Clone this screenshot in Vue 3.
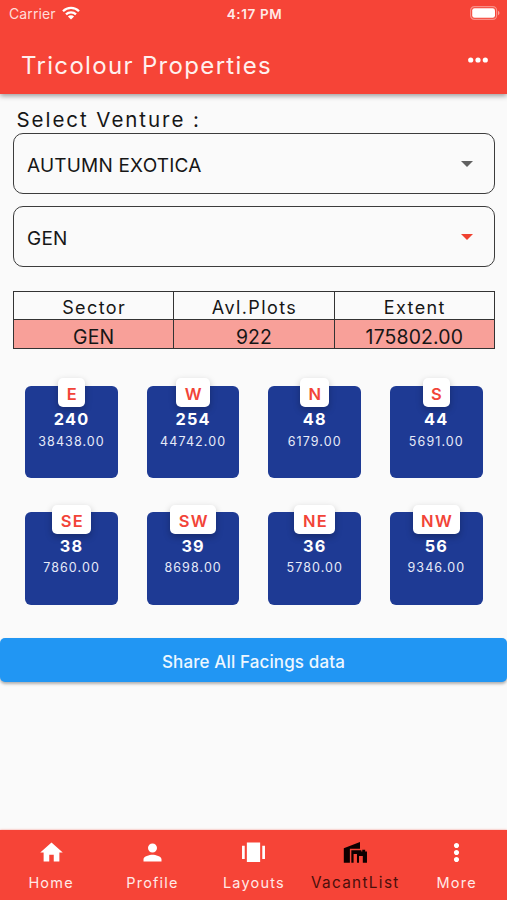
<script setup>
const facings = [
  { name: 'E', plots: '240', extent: '38438.00' },
  { name: 'W', plots: '254', extent: '44742.00' },
  { name: 'N', plots: '48', extent: '6179.00' },
  { name: 'S', plots: '44', extent: '5691.00' },
  { name: 'SE', plots: '38', extent: '7860.00' },
  { name: 'SW', plots: '39', extent: '8698.00' },
  { name: 'NE', plots: '36', extent: '5780.00' },
  { name: 'NW', plots: '56', extent: '9346.00' },
]

const tabs = [
  { label: 'Home', path: 'M10 20v-6h4v6h5v-8h3L12 3 2 12h3v8z' },
  { label: 'Profile', path: 'M12 12c2.21 0 4-1.79 4-4s-1.79-4-4-4-4 1.79-4 4 1.79 4 4 4zm0 2c-2.67 0-8 1.34-8 4v2h16v-2c0-2.66-5.33-4-8-4z' },
  { label: 'Layouts', path: 'M6.1 3.2h11.8v17.2H6.1zM1.8 6h2.4v11.8H1.8zM19.8 6h2.4v11.8h-2.4z' },
  { label: 'VacantList', active: true, path: 'M1.6 21V8.2L16 2.6v6.1H7V21zM8.3 21V10.1h8.9V11H18V9.6h2.6V11h1.6v10h-3.7v-5.8h-3.4V21h-1.8v-7.6h-3V21z' },
  { label: 'More', path: 'M12 8.1c1.27 0 2.3-1.03 2.3-2.3S13.27 3.5 12 3.5 9.7 4.53 9.7 5.8s1.03 2.3 2.3 2.3zm0 1.6c-1.27 0-2.3 1.03-2.3 2.3s1.03 2.3 2.3 2.3 2.3-1.03 2.3-2.3-1.03-2.3-2.3-2.3zm0 6.2c-1.27 0-2.3 1.03-2.3 2.3s1.03 2.3 2.3 2.3 2.3-1.03 2.3-2.3-1.03-2.3-2.3-2.3z' },
]
</script>

<template>
  <div class="screen">
    <header class="top">
      <div class="status">
        <div class="carrier">
          <span>Carrier</span>
          <svg class="wifi" viewBox="0 0 18 14">
            <g fill="none" stroke="#fff" stroke-width="2.3">
              <path d="M1 5.2a11.4 11.4 0 0 1 16 0" />
              <path d="M4 8.4a7.2 7.2 0 0 1 10 0" />
            </g>
            <path fill="#fff" d="M9 13.6 5.9 10.5a4.4 4.4 0 0 1 6.2 0z" />
          </svg>
        </div>
        <span class="time">4:17 PM</span>
        <div class="power">
          <svg class="battery" viewBox="0 0 30 14">
            <rect x=".6" y=".6" width="26" height="12.8" rx="3.8" fill="none" stroke="#fff" stroke-opacity=".4" stroke-width="1.2" />
            <rect x="2.2" y="2.2" width="22.8" height="9.6" rx="2.3" fill="#fff" />
            <path d="M28 4.8v4.4q1.5-.8 1.5-2.2T28 4.8z" fill="#fff" fill-opacity=".5" />
          </svg>
        </div>
      </div>
      <div class="bar">
        <h1>Tricolour Properties</h1>
        <svg class="dots" viewBox="0 0 20 6" fill="#fff">
          <circle cx="2.7" cy="3" r="2.6" />
          <circle cx="10" cy="3" r="2.6" />
          <circle cx="17.3" cy="3" r="2.6" />
        </svg>
      </div>
    </header>

    <main>
      <div class="form">
        <div class="label">Select Venture :</div>
        <div class="select">
          <span>AUTUMN EXOTICA</span>
          <svg class="caret" viewBox="0 0 12 6"><path d="M0 0h12L6 6z" /></svg>
        </div>
        <div class="select">
          <span>GEN</span>
          <svg class="caret red" viewBox="0 0 12 6"><path d="M0 0h12L6 6z" /></svg>
        </div>
        <div class="table">
          <div class="cell head">Sector</div>
          <div class="cell head">Avl.Plots</div>
          <div class="cell head">Extent</div>
          <div class="cell">GEN</div>
          <div class="cell">922</div>
          <div class="cell">175802.00</div>
        </div>
      </div>

      <div class="grid">
        <div v-for="f in facings" :key="f.name" class="card">
          <div class="badge">{{ f.name }}</div>
          <div class="plots">{{ f.plots }}</div>
          <div class="extent">{{ f.extent }}</div>
        </div>
      </div>

      <button class="share">Share All Facings data</button>
    </main>

    <nav>
      <div v-for="t in tabs" :key="t.label" class="tab" :class="{ active: t.active }">
        <svg viewBox="0 0 24 24"><path :d="t.path" /></svg>
        <span>{{ t.label }}</span>
      </div>
    </nav>
  </div>
</template>

<style>
body {
  margin: 0;
  background: #fafafa;
}
</style>

<style scoped>
.screen {
  display: flex;
  flex-direction: column;
  width: 507px;
  height: 900px;
  overflow: hidden;
  background: #fafafa;
  color: #161616;
  font-family: Inter, "Liberation Sans", sans-serif;
}
.top {
  height: 94px;
  flex: none;
  background: #f64437;
  color: #fff;
  box-shadow: 0 2px 5px rgba(0, 0, 0, 0.38);
}
.status {
  display: grid;
  grid-template-columns: 1fr auto 1fr;
  align-items: center;
  height: 27px;
  padding: 0 7px 0 9px;
  font-size: 14px;
}
.carrier {
  display: flex;
  align-items: center;
  gap: 6px;
  color: #ffdcd9;
  letter-spacing: 0.1px;
}
.wifi {
  width: 18px;
  height: 14px;
  margin-top: -2px;
}
.time {
  font-size: 13.5px;
  font-weight: 600;
  letter-spacing: 0.6px;
  color: #ffe9e7;
}
.power {
  display: flex;
  justify-content: flex-end;
}
.battery {
  width: 30px;
  height: 14px;
  margin-top: -1px;
}
.bar {
  display: flex;
  justify-content: space-between;
  padding: 22px 19px 0 21px;
}
h1 {
  margin: 0;
  font-size: 24px;
  line-height: 34px;
  font-weight: 400;
  letter-spacing: 1.33px;
  color: #fff0ee;
}
.dots {
  width: 20px;
  height: 6px;
  margin-top: 8px;
}
main {
  flex: 1;
}
.form {
  padding: 13px 12.5px 0 13px;
}
.label {
  height: 26px;
  padding: 0 3.5px;
  line-height: 25px;
  font-size: 20.5px;
  letter-spacing: 1.95px;
}
.select {
  box-sizing: border-box;
  display: flex;
  align-items: center;
  justify-content: space-between;
  height: 61px;
  margin-bottom: 12px;
  padding: 3px 21px 0 13px;
  border: 1.4px solid #3c3c3c;
  border-radius: 10px;
  font-size: 19px;
  letter-spacing: 0.2px;
}
.caret {
  width: 12px;
  height: 6px;
  margin-top: -3px;
  fill: #616161;
}
.caret.red {
  fill: #ef4130;
}
.table {
  display: grid;
  grid-template-columns: repeat(3, 1fr);
  grid-template-rows: 27px 28px;
  gap: 1px;
  box-sizing: border-box;
  width: 482px;
  margin-top: 24px;
  padding: 1px;
  background: #333;
}
.cell {
  display: flex;
  align-items: center;
  justify-content: center;
  padding-top: 5px;
  background: #f8a099;
  font-size: 19.4px;
  letter-spacing: 0.15px;
}
.cell.head {
  padding: 3px 0 0 1px;
  background: #fafafa;
  font-size: 18px;
  letter-spacing: 1.4px;
}
.grid {
  display: grid;
  grid-template-columns: repeat(4, 92.5px);
  column-gap: 29.1px;
  row-gap: 34px;
  padding: 36.5px 0 0 25.3px;
}
.card {
  display: flex;
  flex-direction: column;
  align-items: center;
  height: 92.5px;
  border-radius: 6px;
  background: #1e3a94;
  color: #fff;
}
.badge {
  height: 29px;
  margin-top: -7.5px;
  padding: 0 7px 0 8.5px;
  border-radius: 5px;
  background: #fff;
  color: #f24438;
  line-height: 33px;
  font-size: 16.5px;
  font-weight: 600;
  letter-spacing: 1.3px;
  box-shadow: 0 3px 7px rgba(0, 0, 0, 0.25);
}
.plots {
  margin-top: 1px;
  line-height: 22px;
  font-size: 16.3px;
  font-weight: 700;
  letter-spacing: 1.2px;
}
.extent {
  margin-top: 0.7px;
  line-height: 22px;
  font-size: 12.5px;
  letter-spacing: 1.1px;
  color: #e6eaf8;
}
.share {
  display: block;
  width: 507px;
  height: 44px;
  margin: 33px 0 0;
  padding: 4px 0 0;
  border: 0;
  border-radius: 5px;
  background: #2196f3;
  color: #edf7ff;
  font: 500 17px Inter, "Liberation Sans", sans-serif;
  letter-spacing: 0.12px;
  box-shadow: 0 2px 3px rgba(0, 0, 0, 0.3);
}
nav {
  display: grid;
  grid-template-columns: repeat(5, 1fr);
  flex: none;
  height: 70px;
  background: #f64437;
  box-shadow: 0 0 2px rgba(246, 68, 55, 0.6);
}
.tab {
  display: flex;
  flex-direction: column;
  align-items: center;
  color: #ffe9e7;
  font-size: 14.5px;
  letter-spacing: 1.2px;
}
.tab svg {
  width: 27px;
  height: 27px;
  margin: 9px 0 0 1px;
  fill: #fff;
}
.tab span {
  margin: 7px 0 0 0.8px;
  line-height: 20px;
}
.tab.active {
  color: #4a0f0b;
  font-size: 15.3px;
  letter-spacing: 1.35px;
}
.tab.active svg {
  fill: #0d0000;
}
</style>
